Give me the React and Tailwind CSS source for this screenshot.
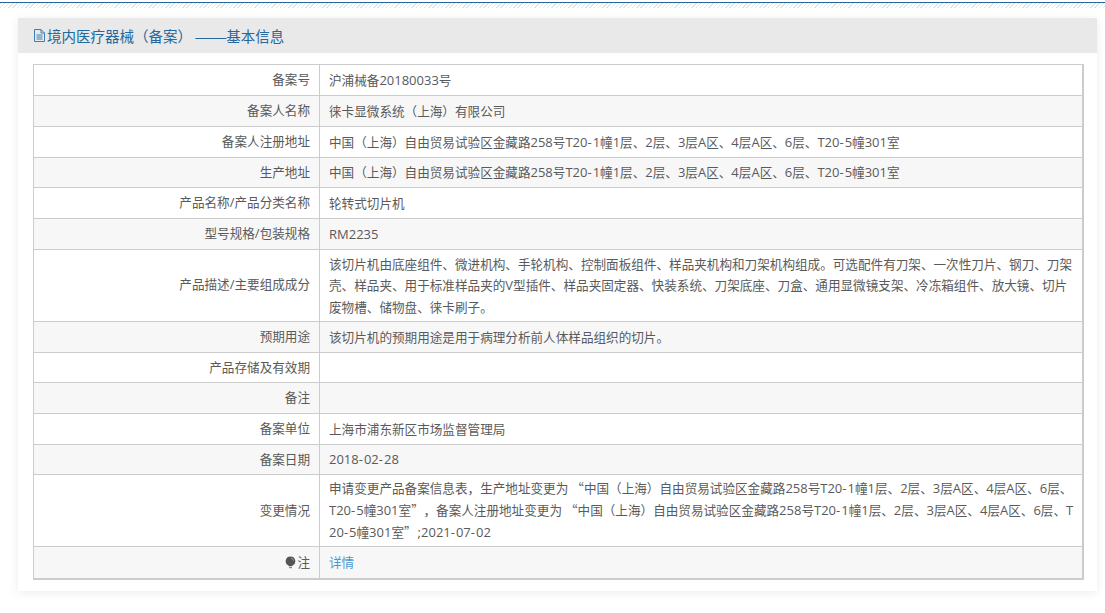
const rows = [
  ["备案号", ["沪浦械备20180033号"], 31],
  ["备案人名称", ["徕卡显微系统（上海）有限公司"], 31],
  ["备案人注册地址", ["中国（上海）自由贸易试验区金藏路258号T20-1幢1层、2层、3层A区、4层A区、6层、T20-5幢301室"], 31],
  ["生产地址", ["中国（上海）自由贸易试验区金藏路258号T20-1幢1层、2层、3层A区、4层A区、6层、T20-5幢301室"], 30],
  ["产品名称/产品分类名称", ["轮转式切片机"], 31],
  ["型号规格/包装规格", ["RM2235"], 31],
  ["产品描述/主要组成成分", ["该切片机由底座组件、微进机构、手轮机构、控制面板组件、样品夹机构和刀架机构组成。可选配件有刀架、一次性刀片、钢刀、刀架", "壳、样品夹、用于标准样品夹的V型插件、样品夹固定器、快装系统、刀架底座、刀盒、通用显微镜支架、冷冻箱组件、放大镜、切片", "废物槽、储物盘、徕卡刷子。"], 72],
  ["预期用途", ["该切片机的预期用途是用于病理分析前人体样品组织的切片。"], 31],
  ["产品存储及有效期", [""], 30],
  ["备注", [""], 31],
  ["备案单位", ["上海市浦东新区市场监督管理局"], 31],
  ["备案日期", ["2018-02-28"], 30],
  ["变更情况", ["申请变更产品备案信息表，生产地址变更为“中国（上海）自由贸易试验区金藏路258号T20-1幢1层、2层、3层A区、4层A区、6层、", "T20-5幢301室”，备案人注册地址变更为“中国（上海）自由贸易试验区金藏路258号T20-1幢1层、2层、3层A区、4层A区、6层、T", "20-5幢301室”;2021-07-02"], 72],
];
const heights = {
  31: "h-[31px]", 30: "h-[30px]", 72: "h-[72px]",
};
function Latin({ text }) {
  return text.split(/([A-Za-z0-9;/]+)/).map((part, i) =>
    i % 2 === 1 ? <span key={i} className="text-[13px] font-['Open_Sans',sans-serif]">{part}</span> : part
  );
}
function Mixed({ text }) {
  return text.split(/(-|“|”，|”)/).map((seg, j) => {
    if (seg === "-") return <span key={j} className="text-[13px] tracking-[1px] font-['Open_Sans',sans-serif]">-</span>;
    if (seg === "“") return <span key={j} className="inline-block pl-[3px]">“</span>;
    if (seg === "”") return <span key={j} className="inline-block pr-[1px]">”</span>;
    if (seg === "”，") return <span key={j} className="inline-block">”<span className="ml-[6px]">，</span></span>;
    return <Latin key={j} text={seg} />;
  });
}
function Row({ label, lines, h, odd }) {
  return (
    <div className={`flex border-b border-[#cccccc] ${heights[h]} ${odd ? "bg-[#f7f7f7]" : "bg-white"}`}>
      <div className="w-[286px] shrink-0 flex items-center justify-end pr-[9px] pb-px border-r border-[#cccccc]"><span><Mixed text={label} /></span></div>
      <div className="flex-1 flex flex-col justify-center pl-[9px] pb-px leading-[21px] whitespace-nowrap">
        {lines.map((l, i) => <div key={i}><Mixed text={l} /></div>)}
      </div>
    </div>
  );
}
export default function App() {
  return (
    <div className="w-[1105px] h-[613px] overflow-hidden bg-white text-[12.6px] text-[#5a5a5a] font-['Noto_Sans_CJK_SC',sans-serif]">
      <div className="h-[2px] bg-white"></div>
      <div className="h-px bg-[#2a6496]"></div>
      <div className="h-[5px] bg-[repeating-linear-gradient(135deg,#dfe6e8_0px,#dfe6e8_1px,#ffffff_1px,#ffffff_3px)]"></div>
      <div className="ml-[18px] mt-[10px] w-[1079px] bg-white shadow-[0_2px_10px_rgba(0,0,0,0.08)] h-[573px]">
        <div className="h-[35px] bg-[#e9e9e9] flex items-center pl-[16px] text-[#23689e] text-[14.5px]">
          <svg width="11" height="13" viewBox="0 0 11 13" fill="none" stroke="#3d7fb5" strokeWidth="1" className="shrink-0 mr-[2px]">
            <path d="M0.5 0.5h6.5l3.5 3.5v8.5h-10z" />
            <path d="M7 0.5v3.5h3.5M2.5 6h6M2.5 8h6M2.5 10h6" />
          </svg>
          <span>境内医疗器械（备案） <span className="text-[15.5px] leading-none font-['Liberation_Sans',sans-serif]">——</span>基本信息</span>
        </div>
        <div className="ml-[15px] mr-[13px] mt-[11px] border border-[#cccccc] border-r-2 border-b-2">
          {rows.map(([label, lines, h], i) => (
            <Row key={label} label={label} lines={lines} h={h} odd={i % 2 === 1} />
          ))}
          <div className="flex h-[31px] bg-[#f7f7f7]">
            <div className="w-[286px] shrink-0 flex items-center justify-end pr-[9px] pb-px border-r border-[#cccccc]">
              <svg width="11" height="13" viewBox="0 0 11 13" className="mr-px">
                <path d="M5.5 0.5a4.7 4.7 0 0 1 2.4 8.8L7 10.2H4L3.1 9.3A4.7 4.7 0 0 1 5.5 0.5z" fill="#555555" />
                <path d="M6 2a3 3 0 0 1 2.5 2.5" stroke="#9a9a9a" strokeWidth="1" fill="none" />
                <rect x="4" y="11" width="3" height="1.2" fill="#888888" />
              </svg>
              <span>注</span>
            </div>
            <div className="flex-1 flex items-center pl-[9px] pb-px text-[#4a98d8]">详情</div>
          </div>
        </div>
      </div>
    </div>
  );
}
